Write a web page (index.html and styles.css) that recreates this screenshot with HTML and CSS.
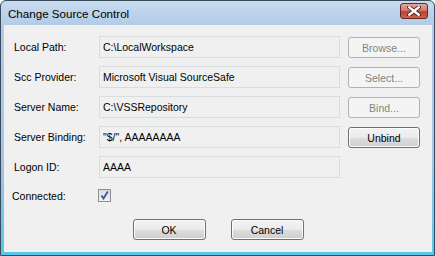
FILE: index.html
```html
<html>
<head>
<link rel="stylesheet" href="styles.css">
<title>Change Source Control</title>
</head>
<body>
<div class="window">
  <div class="titlebar">
    <span class="title">Change Source Control</span>
    <span class="close">
      <svg width="14" height="10" viewBox="0 0 14 10">
        <path d="M2 1 L12 9 M12 1 L2 9" stroke="#4a2320" stroke-width="4.2" stroke-linecap="square"/>
        <path d="M2.3 1.3 L11.7 8.7 M11.7 1.3 L2.3 8.7" stroke="#ffffff" stroke-width="2.4" stroke-linecap="square"/>
      </svg>
    </span>
  </div>
  <div class="client">
    <div class="form">
      <label class="lbl">Local Path:</label>
      <div class="field">C:\LocalWorkspace</div>
      <button class="btn" disabled>Browse...</button>

      <label class="lbl">Scc Provider:</label>
      <div class="field">Microsoft Visual SourceSafe</div>
      <button class="btn" disabled>Select...</button>

      <label class="lbl">Server Name:</label>
      <div class="field">C:\VSSRepository</div>
      <button class="btn" disabled>Bind...</button>

      <label class="lbl">Server Binding:</label>
      <div class="field">"$/", AAAAAAAA</div>
      <button class="btn">Unbind</button>

      <label class="lbl">Logon ID:</label>
      <div class="field">AAAA</div>
      <span></span>

      <label class="lbl conn">Connected:</label>
      <div class="check-cell">
        <span class="check">
          <svg width="11" height="11" viewBox="0 0 11 11">
            <path d="M2.5 5.5 L4.5 8.5 L8.8 1.6" fill="none" stroke="#3d59a6" stroke-width="1.8"/>
          </svg>
        </span>
      </div>
      <span></span>
    </div>
    <div class="actions">
      <button class="btn">OK</button>
      <button class="btn">Cancel</button>
    </div>
  </div>
</div>
</body>
</html>
```

FILE: styles.css
```css
/* dialog frame */
* {box-sizing: border-box;}

body {
  margin: 0;
  background: #ffffff;
  font-family: "Liberation Sans", Arial, sans-serif;
}

.window {
  width: 435px;
  height: 256px;
  border: 1px solid #3c4a5e;
  border-radius: 6px 6px 0 0;
  background: linear-gradient(to bottom, #c8dbef 0, #b3cbe7 24px, #a8c6e8 150px, #58c6ec 100%);
  display: flex;
  flex-direction: column;
}

.titlebar {
  height: 24px;
  display: flex;
  align-items: center;
  justify-content: space-between;
  padding: 0 6px 0 6px;
}

.title {
  font-size: 11.6px;
  color: #000;
  padding-left: 1px;
}

.close {
  width: 28px;
  height: 16px;
  margin-top: -5px;
  border: 1px solid #5e2a27;
  border-radius: 3px;
  background: linear-gradient(to bottom, #e4a99f 0, #d47a6c 45%, #c2402f 55%, #d0604d 100%);
  display: flex;
  align-items: center;
  justify-content: center;
}

.client {
  flex: 1;
  margin: 0 2px 3px 3px;
  background: #f0f0f0;
  padding: 11px 0 0 10px;
  font-size: 10.5px;
  color: #000;
}

/* field grid */
.form {
  display: grid;
  grid-template-columns: 85px 241px 72px;
  grid-template-rows: 22px 22px 22px 22px 22px 19px;
  column-gap: 0;
  row-gap: 8px;
  align-items: center;
}

.form .btn {
  margin-left: 8px;
  height: 21px;
  width: 72px;
  align-self: end;
}

.lbl {
  white-space: nowrap;
}

.lbl.conn {
  margin-left: -2px;
}

.field {
  height: 22px;
  border: 1px solid #dadde0;
  background: #f0f0f0;
  padding: 0 3px;
  display: flex;
  align-items: center;
  white-space: nowrap;
  overflow: hidden;
}

.check-cell {
  display: flex;
  align-items: center;
}

.check {
  width: 13px;
  height: 13px;
  margin-left: -1px;
  border: 1px solid #8f8f8f;
  background: linear-gradient(to bottom, #dcdcdc, #f2f2f2);
  display: flex;
  align-items: center;
  justify-content: center;
}

/* buttons */
.btn {
  font-family: "Liberation Sans", Arial, sans-serif;
  font-size: 10.5px;
  color: #000;
  height: 21px;
  width: 73px;
  padding: 0;
  border: 1px solid #707070;
  border-radius: 3px;
  background: linear-gradient(to bottom, #f3f3f3 0, #ebebeb 50%, #dddddd 51%, #cfcfcf 100%);
  box-shadow: inset 0 0 0 1px #fcfcfc;
}

.btn:disabled {
  color: #838383;
  border-color: #adb2b5;
  background: #f4f4f4;
  box-shadow: none;
}

.actions {
  display: flex;
  justify-content: center;
  gap: 25px;
  margin-top: 14px;
  padding-right: 10px;
}
```
